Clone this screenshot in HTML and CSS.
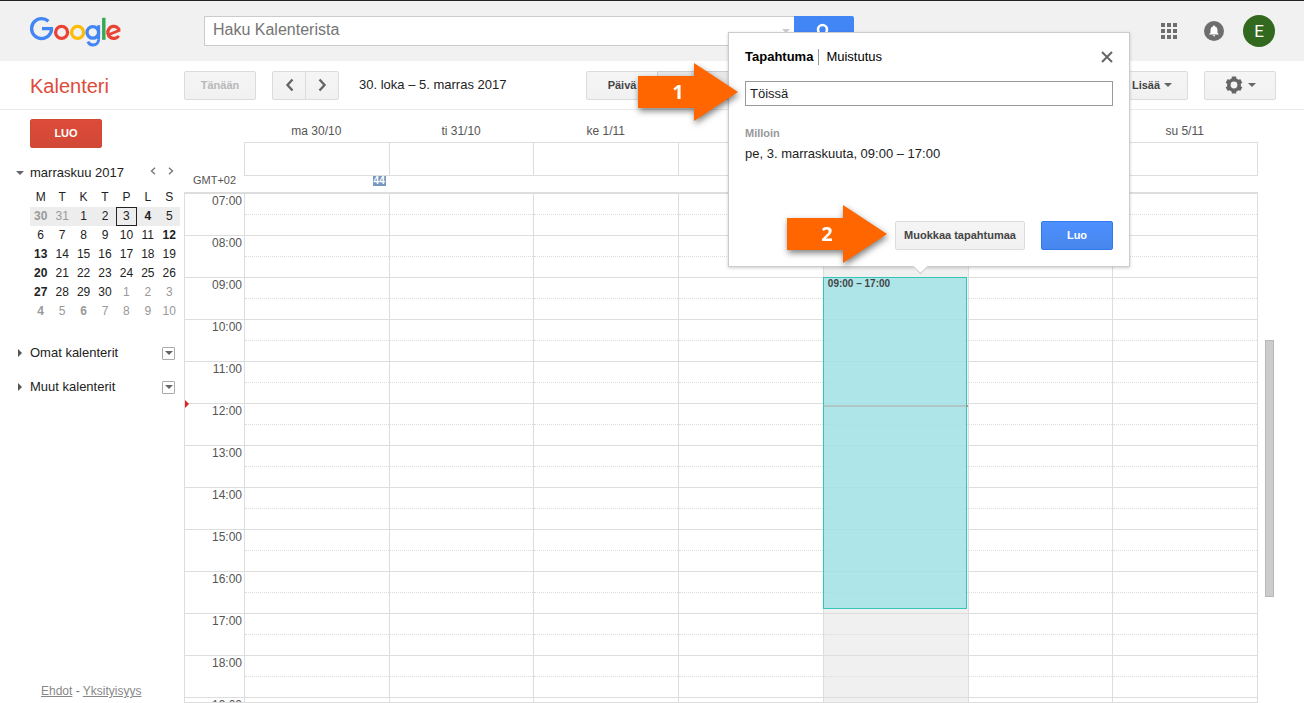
FILE: index.html
```html
<!DOCTYPE html>
<html lang="fi">
<head>
<meta charset="utf-8">
<title>Kalenteri</title>
<link rel="stylesheet" href="styles.css">
</head>
<body>
<header class="topbar">
  <a class="logo" href="#" aria-label="Google">
    <svg width="94" height="32" viewBox="29 15 94 32" fill="none" stroke-width="3.3">
      <circle cx="41.6" cy="28.6" r="10" stroke="#4285f4" pathLength="360" stroke-dasharray="313 47"/>
      <line x1="42" y1="28.6" x2="53" y2="28.6" stroke="#4285f4"/>
      <circle cx="61.6" cy="32.400" r="6" stroke="#ea4335"/>
      <circle cx="77.6" cy="32.400" r="6" stroke="#fbbc05"/>
      <circle cx="92.8" cy="32.400" r="5.800" stroke="#4285f4"/>
      <line x1="98.600" y1="25.200" x2="98.600" y2="39.600" stroke="#4285f4" stroke-width="3"/>
      <circle cx="93" cy="39.400" r="5.600" stroke="#4285f4" stroke-width="3" pathLength="360" stroke-dasharray="155 205"/>
      <line x1="103.800" y1="17.800" x2="103.800" y2="39.800" stroke="#34a853" stroke-width="3.400"/>
      <circle cx="113.800" cy="32.400" r="6" stroke="#ea4335" pathLength="360" stroke-dasharray="302 58" transform="rotate(35 113.800 32.400)"/>
      <line x1="108.600" y1="34.800" x2="120.200" y2="30" stroke="#ea4335" stroke-width="2.800"/>
    </svg>
  </a>
  <form class="search">
    <input class="search-input" type="text" placeholder="Haku Kalenterista" aria-label="Haku Kalenterista">
    <i class="caret search-caret"></i>
    <button class="search-button" type="button" aria-label="Haku">
      <svg width="20" height="20" viewBox="0 0 20 20" fill="none" stroke="#fff" stroke-width="2.600"><circle cx="8.500" cy="8.500" r="4.500"/><line x1="12" y1="12" x2="17" y2="17"/></svg>
    </button>
  </form>
  <nav class="account">
    <button class="plain" type="button" aria-label="Sovellukset">
      <svg width="16" height="16" viewBox="0 0 16 16" fill="#6e6e6e"><path d="M0 0h4v4H0zM6 0h4v4H6zM12 0h4v4h-4zM0 6h4v4H0zM6 6h4v4H6zM12 6h4v4h-4zM0 12h4v4H0zM6 12h4v4H6zM12 12h4v4h-4z"/></svg>
    </button>
    <button class="plain" type="button" aria-label="Ilmoitukset">
      <svg width="20" height="20" viewBox="0 0 20 20"><circle cx="10" cy="10" r="10" fill="#6e6e6e"/><path d="M10 4.6c.7 0 1 .5 1 1 1.700.5 2.500 1.900 2.500 3.700v2.500l1.200 1.200v.6H5.300V13l1.200-1.200V9.300c0-1.800.8-3.200 2.500-3.700 0-.5.300-1 1-1zM8.800 14.200h2.400c0 .8-.5 1.200-1.200 1.200s-1.200-.4-1.200-1.200z" fill="#fff"/></svg>
    </button>
    <button class="avatar" type="button">E</button>
  </nav>
</header>

<div class="toolbar">
  <h1 class="title">Kalenteri</h1>
  <button class="btn today" type="button" disabled>Tänään</button>
  <div class="group pager">
    <button class="btn" type="button" aria-label="Edellinen"><svg width="10" height="14" viewBox="0 0 10 14" fill="none" stroke="#666" stroke-width="2.400"><path d="M8.500 1.500L3.500 7l5 5.500"/></svg></button>
    <button class="btn" type="button" aria-label="Seuraava"><svg width="10" height="14" viewBox="0 0 10 14" fill="none" stroke="#666" stroke-width="2.400"><path d="M2.500 1.500L7.500 7l-5 5.500"/></svg></button>
  </div>
  <span class="range">30. loka – 5. marras 2017</span>
  <div class="group views">
    <button class="btn" type="button">Päivä</button>
    <button class="btn active" type="button" aria-label="Viikko"></button>
  </div>
  <button class="btn more" type="button">Lisää <i class="caret"></i></button>
  <button class="btn settings" type="button" aria-label="Asetukset">
    <svg width="18" height="18" viewBox="0 0 18 18" fill="none" stroke="#666"><circle cx="9" cy="9" r="5.200" stroke-width="3.600"/><g stroke-width="4.400"><path d="M9 .6v2.600M9 14.800v2.600M1.700 4.800l2.300 1.300M14 11.900l2.300 1.300M1.700 13.200l2.300-1.300M14 6.100l2.300-1.300"/></g></svg>
    <i class="caret"></i>
  </button>
</div>

<main class="main">
  <aside class="sidebar">
    <button class="create" type="button">LUO</button>
    <div class="month">
      <i class="caret"></i>
      <span class="month-name">marraskuu 2017</span>
      <button class="plain" type="button" aria-label="Edellinen kuukausi"><svg width="6" height="8" viewBox="0 0 6 8" fill="none" stroke="#777" stroke-width="1.400"><path d="M5 .8L1.500 4 5 7.200"/></svg></button>
      <button class="plain" type="button" aria-label="Seuraava kuukausi"><svg width="6" height="8" viewBox="0 0 6 8" fill="none" stroke="#777" stroke-width="1.400"><path d="M1 .8L4.500 4 1 7.200"/></svg></button>
    </div>
    <table class="mini">
      <thead><tr><th>M</th><th>T</th><th>K</th><th>T</th><th>P</th><th>L</th><th>S</th></tr></thead>
      <tbody>
        <tr class="week"><td class="off has">30</td><td class="off">31</td><td>1</td><td>2</td><td class="now">3</td><td class="has">4</td><td>5</td></tr>
        <tr><td>6</td><td>7</td><td>8</td><td>9</td><td>10</td><td>11</td><td class="has">12</td></tr>
        <tr><td class="has">13</td><td>14</td><td>15</td><td>16</td><td>17</td><td>18</td><td>19</td></tr>
        <tr><td class="has">20</td><td>21</td><td>22</td><td>23</td><td>24</td><td>25</td><td>26</td></tr>
        <tr><td class="has">27</td><td>28</td><td>29</td><td>30</td><td class="off">1</td><td class="off">2</td><td class="off">3</td></tr>
        <tr><td class="off has">4</td><td class="off">5</td><td class="off has">6</td><td class="off">7</td><td class="off">8</td><td class="off">9</td><td class="off">10</td></tr>
      </tbody>
    </table>
    <div class="list"><i class="side"></i><span>Omat kalenterit</span><button class="drop" type="button" aria-label="Omat kalenterit: valikko"><i class="caret"></i></button></div>
    <div class="list"><i class="side"></i><span>Muut kalenterit</span><button class="drop" type="button" aria-label="Muut kalenterit: valikko"><i class="caret"></i></button></div>
    <footer class="legal"><a href="#">Ehdot</a> - <a href="#">Yksityisyys</a></footer>
  </aside>

  <section class="calendar">
    <div class="days row">
      <span></span><span>ma 30/10</span><span>ti 31/10</span><span>ke 1/11</span><span></span><span></span><span></span><span>su 5/11</span>
    </div>
    <div class="allday row">
      <span></span><span class="cell"></span><span class="cell"></span><span class="cell"></span><span class="cell"></span><span class="cell"></span><span class="cell"></span><span class="cell"></span>
    </div>
    <div class="zone row"><span class="gmt">GMT+02</span><span class="weekno"><b>44</b></span></div>
    <div class="hours">
      <div class="hour row"><time>07:00</time><i></i><i></i><i></i><i></i><i></i><i></i><i></i></div>
      <div class="hour row"><time>08:00</time><i></i><i></i><i></i><i></i><i></i><i></i><i></i></div>
      <div class="hour row"><time>09:00</time><i></i><i></i><i></i><i></i><i><span class="event">09:00 – 17:00</span></i><i></i><i></i></div>
      <div class="hour row"><time>10:00</time><i></i><i></i><i></i><i></i><i></i><i></i><i></i></div>
      <div class="hour row"><time>11:00</time><i></i><i></i><i></i><i></i><i></i><i></i><i></i></div>
      <div class="hour row current"><time>12:00</time><i></i><i></i><i></i><i></i><i><span class="nowline"></span></i><i></i><i></i></div>
      <div class="hour row"><time>13:00</time><i></i><i></i><i></i><i></i><i></i><i></i><i></i></div>
      <div class="hour row"><time>14:00</time><i></i><i></i><i></i><i></i><i></i><i></i><i></i></div>
      <div class="hour row"><time>15:00</time><i></i><i></i><i></i><i></i><i></i><i></i><i></i></div>
      <div class="hour row"><time>16:00</time><i></i><i></i><i></i><i></i><i></i><i></i><i></i></div>
      <div class="hour row"><time>17:00</time><i></i><i></i><i></i><i></i><i></i><i></i><i></i></div>
      <div class="hour row"><time>18:00</time><i></i><i></i><i></i><i></i><i></i><i></i><i></i></div>
      <div class="hour row"><time>19:00</time><i></i><i></i><i></i><i></i><i></i><i></i><i></i></div>
    </div>
  </section>
  <div class="track"><div class="thumb"></div></div>
</main>

<section class="popup" role="dialog" aria-label="Tapahtuma">
  <div class="popup-head">
    <b class="tab">Tapahtuma</b><span class="tab">Muistutus</span>
    <button class="plain close" type="button" aria-label="Sulje"><svg width="12" height="12" viewBox="0 0 12 12" stroke="#666" stroke-width="2"><path d="M1 1l10 10M11 1L1 11"/></svg></button>
  </div>
  <input class="name" type="text" value="Töissä" aria-label="Tapahtuman nimi">
  <div class="label">Milloin</div>
  <div class="when">pe, 3. marraskuuta, 09:00 – 17:00</div>
  <div class="actions">
    <button class="btn edit" type="button">Muokkaa tapahtumaa</button>
    <button class="btn primary" type="button">Luo</button>
  </div>
</section>

<div class="step step-one"><svg width="100" height="58" viewBox="0 0 100 58" fill="#f60"><path d="M0 13h56V0l44 29-44 29V45H0z"/></svg><span>1</span></div>
<div class="step step-two"><svg width="100" height="58" viewBox="0 0 100 58" fill="#f60"><path d="M0 13h56V0l44 29-44 29V45H0z"/></svg><span>2</span></div>
</body>
</html>
```
FILE: styles.css
```css
*, *::before, *::after { box-sizing: border-box; }

body {
  position: relative;
  display: flex;
  flex-direction: column;
  height: 100vh;
  margin: 0;
  overflow: hidden;
  background: #fff;
  color: #222;
  font: 13px/16px "Liberation Sans", Arial, sans-serif;
}

button, input { font-family: inherit; }

.plain {
  display: flex;
  padding: 0;
  border: 0;
  background: none;
}

.caret {
  border: 4px solid transparent;
  border-top-color: #666;
  border-bottom: 0;
}

/* Top bar */
.topbar {
  display: flex;
  flex: none;
  align-items: center;
  height: 61px;
  padding: 0 29px;
  border-top: 1px solid #222;
  background: #f1f1f1;
}

.logo { display: flex; width: 175px; }

.search {
  position: relative;
  display: flex;
  width: 650px;
}

.search-input {
  flex: 1;
  height: 30px;
  padding: 0 8px 3px;
  border: 1px solid #ccc;
  border-right: 0;
  border-radius: 0;
  background: #fff;
  font-size: 16px;
}

.search-input::placeholder { color: #757575; opacity: 1; }

.search-caret {
  position: absolute;
  top: 13px;
  right: 64px;
  border-top-color: #ccc;
}

.search-button {
  display: flex;
  justify-content: center;
  width: 60px;
  height: 30px;
  padding: 5px 0 0;
  border: 0;
  border-radius: 0 2px 2px 0;
  background: #4285f4;
}

.account {
  display: flex;
  align-items: center;
  gap: 19px;
  margin-left: auto;
}

.account .plain:first-child { margin-right: 8px; }

.avatar {
  width: 32px;
  height: 32px;
  padding: 0;
  border: 0;
  border-radius: 50%;
  background: #33691e;
  color: #fff;
  font: 17px/32px Roboto, sans-serif;
}

/* Toolbar */
.toolbar {
  display: flex;
  flex: none;
  align-items: center;
  height: 49px;
  padding: 0 28px 0 30px;
  border-bottom: 1px solid #ebebeb;
}

.title {
  width: 154px;
  margin: 0;
  padding-top: 2px;
  color: #dd4b39;
  font-size: 20px;
  font-weight: 400;
  line-height: 24px;
}

.btn {
  display: flex;
  align-items: center;
  justify-content: center;
  height: 29px;
  padding: 0 0 1px;
  border: 1px solid #dcdcdc;
  border-radius: 2px;
  background: linear-gradient(#f5f5f5, #f1f1f1);
  color: #444;
  font-size: 11px;
  font-weight: 700;
}

.today { width: 72px; color: #b8b8b8; }

.group { display: flex; }
.group .btn:first-child { border-radius: 2px 0 0 2px; }
.group .btn + .btn { margin-left: -1px; border-radius: 0 2px 2px 0; }

.pager { margin: 0 20px 0 16px; }
.pager .btn { width: 34px; }

.range { flex: none; width: 227px; }

.views .btn { width: 72px; }
.views .active { width: 144px; border-color: #ccc; background: #e8e8e8; }

.more { gap: 4px; width: 72px; margin: 0 16px 0 auto; }
.settings { gap: 5px; width: 72px; }

/* Sidebar */
.main { display: flex; flex: 1; min-height: 0; }

.sidebar {
  display: flex;
  flex: none;
  flex-direction: column;
  width: 184px;
  padding: 9px 4px 4px 16px;
}

.create {
  width: 72px;
  height: 29px;
  margin-left: 14px;
  padding: 0 0 1px;
  border: 1px solid #d14836;
  border-radius: 2px;
  background: linear-gradient(#dd4b39, #d14836);
  color: #fff;
  font-size: 11px;
  font-weight: 700;
}

.month {
  display: flex;
  align-items: center;
  gap: 6px;
  margin-top: 17px;
}

.month-name { flex: 1; }
.month .plain { margin: 0 6px 4px 0; }

.mini {
  width: 150px;
  margin: 7px 0 0 14px;
  border-collapse: collapse;
  table-layout: fixed;
  font-size: 12px;
  line-height: 19px;
  text-align: center;
}

.mini th, .mini td { height: 19px; padding: 0; font-weight: 400; }
.mini .week { background: #ededed; }
.mini .off { color: #999; }
.mini .has { font-weight: 700; }
.mini .now { outline: 1px solid #222; outline-offset: -1px; }

.list {
  display: flex;
  align-items: center;
  gap: 8px;
  height: 34px;
  padding: 0 5px 0 2px;
}

.mini + .list { margin-top: 15px; }
.list span { flex: 1; }

.side {
  border: 4px solid transparent;
  border-left-color: #555;
  border-right: 0;
}

.drop {
  display: flex;
  align-items: center;
  justify-content: center;
  width: 13px;
  height: 13px;
  padding: 0;
  border: 1px solid #aaa;
  border-radius: 1px;
  background: #fff;
}

.legal { margin: auto 0 0 25px; color: #777; font-size: 12px; }
.legal a { color: #888; }

/* Week grid */
.calendar {
  display: flex;
  flex: 1;
  flex-direction: column;
  color: #555;
  font-size: 12px;
}

.row { display: grid; grid-template-columns: 59px repeat(7, 1fr); }

.days, .allday, .zone { padding: 0 1px; }

.days { padding-top: 13px; padding-bottom: 3px; text-align: center; }

.allday .cell {
  height: 34px;
  border: solid #ddd;
  border-width: 1px 0 1px 1px;
}

.allday .cell:last-child { margin-right: -1px; border-right-width: 1px; }

.zone { height: 16px; }
.gmt { padding-left: 8px; font-size: 11px; line-height: 8px; }
.weekno { display: flex; align-items: flex-start; justify-content: flex-end; padding-right: 3px; }

.weekno b {
  height: 10px;
  padding: 0 1px;
  background: #7799bf;
  color: #fff;
  font-size: 10px;
  line-height: 10px;
}

.hours {
  flex: 1;
  min-height: 0;
  overflow: hidden;
  border: 1px solid #ddd;
  border-top-width: 2px;
}

.hour { position: relative; height: 42px; }

.hour time {
  padding-right: 2px;
  border-bottom: 1px solid #ddd;
  line-height: 15px;
  text-align: right;
}

.hour i {
  position: relative;
  border: solid #ddd;
  border-width: 0 0 1px 1px;
  font-style: normal;
}

.hour i::before {
  display: block;
  height: 21px;
  border-bottom: 1px dotted #ddd;
  content: "";
}

.hour i:nth-of-type(5) { background: #f0f0f0; }

.event {
  position: absolute;
  z-index: 2;
  top: -1px;
  right: 1px;
  left: -1px;
  height: 332px;
  padding-left: 4px;
  border: 1px solid #36c4b5;
  background: rgba(152, 225, 229, .75);
  color: #444;
  font-size: 10px;
  font-weight: 700;
  line-height: 12px;
}

.nowline {
  position: absolute;
  z-index: 1;
  top: 1px;
  right: 0;
  left: 0;
  height: 2px;
  background: #f2796b;
}

.current::before {
  position: absolute;
  top: -4px;
  left: 0;
  border: 4px solid transparent;
  border-right: 0;
  border-left-color: #d22;
  content: "";
}

.track { flex: none; width: 46px; padding: 230px 0 0 7px; }

.thumb {
  width: 9px;
  height: 257px;
  border: 1px solid #b8b8b8;
  background: #ccc;
}

/* New event bubble */
.popup {
  position: absolute;
  z-index: 3;
  top: 32px;
  right: 174px;
  width: 402px;
  padding: 16px;
  border: 1px solid #ccc;
  background: #fff;
  color: #000;
  box-shadow: 0 1px 3px rgba(0, 0, 0, .2);
}

.popup::after {
  position: absolute;
  bottom: -6px;
  left: 186px;
  width: 11px;
  height: 11px;
  border: solid #ccc;
  border-width: 0 1px 1px 0;
  background: #fff;
  transform: rotate(45deg);
  content: "";
}

.popup-head { display: flex; align-items: center; }
.tab + .tab { margin-left: 5px; padding-left: 7px; border-left: 1px solid #999; }
.close { margin-left: auto; }

.name {
  display: block;
  width: 100%;
  height: 25px;
  margin-top: 16px;
  padding: 0 4px;
  border: 1px solid #999;
  border-radius: 0;
  background: #fff;
  color: #222;
  font-size: 13px;
}

.label { margin-top: 19px; color: #999; font-size: 11px; font-weight: 700; }
.when { margin-top: 5px; color: #222; }

.actions {
  display: flex;
  justify-content: flex-end;
  gap: 16px;
  margin-top: 59px;
}

.edit { width: 130px; }

.primary {
  width: 72px;
  border-color: #3079ed;
  background: linear-gradient(#4d90fe, #4787ed);
  color: #fff;
}

/* Numbered arrows */
.step {
  position: absolute;
  z-index: 4;
  display: flex;
  filter: drop-shadow(1px 3px 3px rgba(0, 0, 0, .5));
}

.step-one { top: 63px; right: 566px; }
.step-two { top: 205px; right: 417px; }

.step span {
  position: absolute;
  inset: 0 20px 0 0;
  color: #fff;
  font: 700 20px/58px "Open Sans", sans-serif;
  text-align: center;
}
```
